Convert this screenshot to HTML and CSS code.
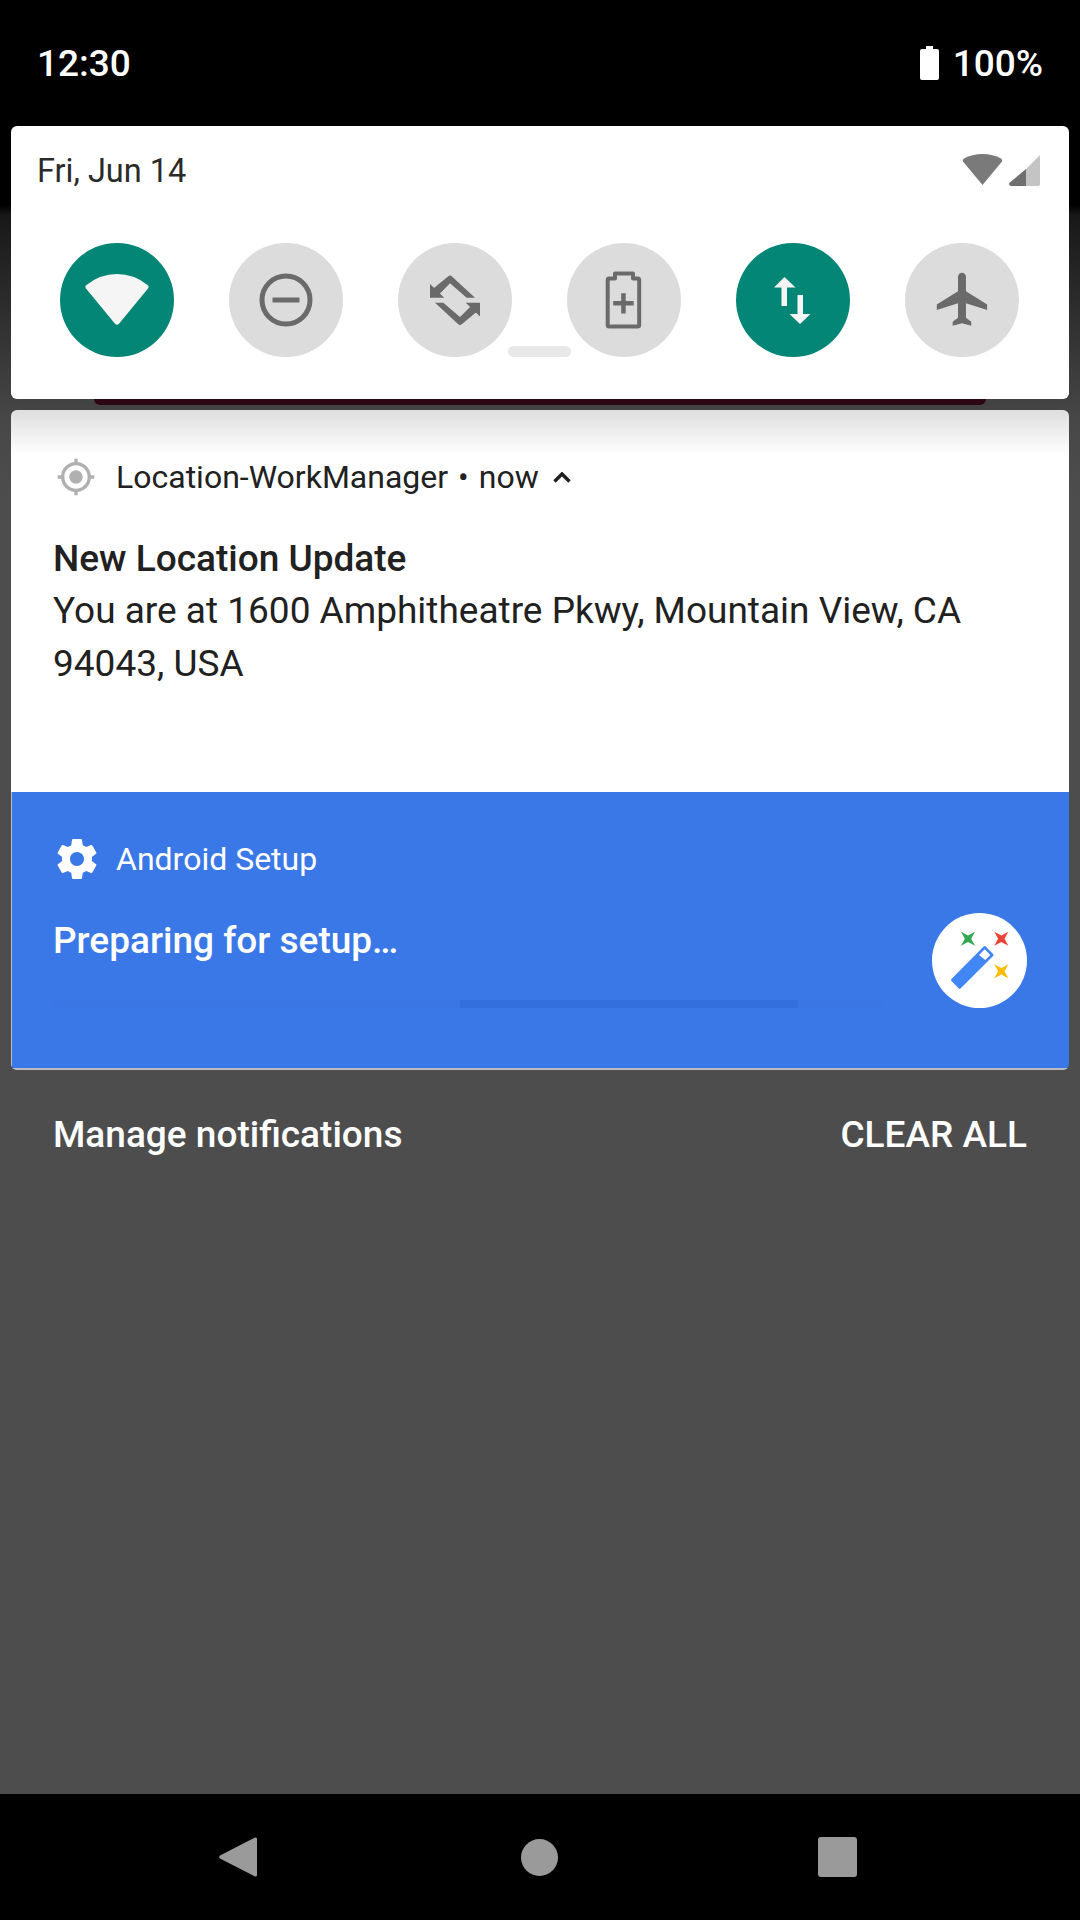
FILE: index.html
```html
<!DOCTYPE html>
<html lang="en">
<head>
  <meta charset="UTF-8">
  <meta name="viewport" content="width=device-width, initial-scale=1.0">
  <title>Notification shade</title>
  <link rel="stylesheet" href="styles.css">
</head>
<body>
  <div id="shade">
    <header class="status-bar">
      <span class="clock">12:30</span>
      <div class="status-right">
        <svg class="battery-icon" viewBox="0 0 19 34"><path d="M6 0h7v3h4a2 2 0 0 1 2 2v27a2 2 0 0 1-2 2H2a2 2 0 0 1-2-2V5a2 2 0 0 1 2-2h4z"/></svg>
        <span>100%</span>
      </div>
    </header>

    <section class="quick-panel">
      <div class="panel-top">
        <span class="date">Fri, Jun 14</span>
        <div class="panel-icons">
          <svg class="wifi-small" viewBox="0 0 41 32"><path d="M20.500 31 1 7.500Q0 6 2 4.500 10 0 20.500 0T39 4.500q2 1.500 1 3z"/></svg>
          <svg class="signal-small" viewBox="0 0 31 31"><path class="signal-off" d="M31 0v29a2 2 0 0 1-2 2H17V14z"/><path class="signal-on" d="M17 14v17H2a2 2 0 0 1-1.500-3.200z"/></svg>
        </div>
      </div>
      <div class="tiles">
        <div class="tile on">
          <svg viewBox="0 0 114 114"><path class="tile-fill-light" d="M54.800 80.500 26 45.500Q24.500 43.500 26.500 42 40 31 57 31T87.500 42Q89.500 43.500 88 45.500L59.200 80.500Q57 83 54.800 80.500z"/></svg>
        </div>
        <div class="tile">
          <svg viewBox="0 0 114 114"><circle class="tile-line" cx="57" cy="57" r="24"/><path class="tile-fill" d="M43.500 54.500h27v5h-27z"/></svg>
        </div>
        <div class="tile">
          <svg viewBox="0 0 114 114">
            <path class="tile-fill" d="M50 33.500Q52 31.500 54 33.500L77 54.700H68.700L52 40.300 42 50.500 36 45zM32 54.700V41L46.300 54.700z"/>
            <path class="tile-fill" transform="rotate(180 57 57.200)" d="M50 33.500Q52 31.500 54 33.500L77 54.700H68.700L52 40.300 42 50.500 36 45zM32 54.700V41L46.300 54.700z"/>
          </svg>
        </div>
        <div class="tile">
          <svg viewBox="0 0 114 114"><path class="tile-line battery-line" d="M40.700 37a1.500 1.500 0 0 1 1.500-1.500H48v-5h18v5h4.700a1.500 1.500 0 0 1 1.500 1.500v45a1.500 1.500 0 0 1-1.500 1.500H42.200a1.500 1.500 0 0 1-1.500-1.500z"/><path class="tile-fill" d="M54.200 50.300h4.500v7.800h8v4.500h-8v8h-4.500v-8h-8v-4.500h8z"/></svg>
        </div>
        <div class="tile on">
          <svg viewBox="0 0 114 114"><path class="tile-fill-light" d="M48.500 34 38 44.500h7.500V63h5.500V44.500h8.500zM61.500 52v19h-8l10.500 10 10.500-10H67V52z"/></svg>
        </div>
        <div class="tile">
          <svg viewBox="0 0 114 114"><g transform="translate(26.500 24.500) scale(2.650)"><path class="tile-fill" d="M21 16v-2l-8-5V3.500c0-.83-.67-1.500-1.500-1.500S10 2.670 10 3.500V9l-8 5v2l8-2.500V19l-2 1.500V22l3.500-1 3.500 1v-1.500L13 19v-5.500l8 2.500z"/></g></svg>
        </div>
      </div>
      <div class="handle"></div>
    </section>
    <div class="behind-strip"></div>

    <section class="card">
      <div class="note-location">
        <div class="note-head">
          <svg class="gps-icon" viewBox="0 0 24 24"><path d="M12 8c-2.210 0-4 1.790-4 4s1.790 4 4 4 4-1.790 4-4-1.790-4-4-4zm8.940 3c-.46-4.170-3.770-7.480-7.940-7.940V1h-2v2.060C6.830 3.520 3.520 6.830 3.060 11H1v2h2.060c.46 4.170 3.770 7.480 7.940 7.940V23h2v-2.060c4.170-.46 7.480-3.770 7.940-7.940H23v-2h-2.060zM12 19c-3.870 0-7-3.130-7-7s3.130-7 7-7 7 3.130 7 7-3.130 7-7 7z"/></svg>
          <span>Location-WorkManager</span>
          <span class="dot">•</span>
          <span>now</span>
          <svg class="chevron" viewBox="0 0 18 11"><path d="M1.500 9.500 9 2l7.500 7.500"/></svg>
        </div>
        <div class="note-title">New Location Update</div>
        <p class="note-text">You are at 1600 Amphitheatre Pkwy, Mountain View, CA 94043, USA</p>
      </div>
      <div class="note-setup">
        <div class="setup-main">
          <div class="note-head">
            <svg class="gear-icon" viewBox="0 0 24 24"><path d="M19.430 12.980c.04-.32.07-.64.07-.98s-.03-.66-.07-.98l2.110-1.650c.19-.15.24-.42.12-.64l-2-3.460c-.12-.22-.39-.3-.61-.22l-2.490 1c-.52-.4-1.080-.73-1.690-.98l-.38-2.650C14.460 2.180 14.250 2 14 2h-4c-.25 0-.46.18-.49.42l-.38 2.650c-.61.25-1.170.59-1.690.98l-2.490-1c-.23-.09-.49 0-.61.22l-2 3.460c-.13.22-.07.49.12.64l2.110 1.650c-.04.32-.07.65-.07.98s.03.66.07.98l-2.110 1.650c-.19.15-.24.42-.12.64l2 3.460c.12.22.39.3.61.22l2.490-1c.52.4 1.080.73 1.690.98l.38 2.650c.03.24.24.42.49.42h4c.25 0 .46-.18.49-.42l.38-2.650c.61-.25 1.170-.59 1.690-.98l2.490 1c.23.09.49 0 .61-.22l2-3.460c.12-.22.07-.49-.12-.64l-2.110-1.650zM12 15.500c-1.930 0-3.500-1.570-3.500-3.500s1.570-3.500 3.500-3.500 3.500 1.570 3.500 3.500-1.570 3.500-3.500 3.500z"/></svg>
            <span>Android Setup</span>
          </div>
          <div class="setup-title">Preparing for setup…</div>
          <div class="progress"><div class="progress-bar"></div></div>
        </div>
        <svg class="wand" viewBox="0 0 95 95">
          <circle cx="47.500" cy="47.500" r="47.500" fill="#fff"/>
          <path fill="#4285f4" stroke="#4285f4" stroke-width="3" stroke-linejoin="round" d="M52.700 34.500 60 42 27.700 74.300 20.500 67z"/>
          <path fill="#fff" d="M52.700 36.300 58.300 42l-5 5-6.300-5z"/>
          <path fill="#34a853" d="M29 18.700 36 22.500l7-3.800-3.800 7 3.800 7-7-3.800-7 3.800 3.800-7z"/>
          <path fill="#ea4335" d="M62.300 18.700l7 3.800 7-3.800-3.800 7 3.800 7-7-3.800-7 3.800 3.800-7z"/>
          <path fill="#fbbc04" d="M62.300 51.300l7 3.800 7-3.800-3.800 7 3.800 7-7-3.800-7 3.800 3.800-7z"/>
        </svg>
      </div>
    </section>

    <div class="footer-actions">
      <span>Manage notifications</span>
      <span>CLEAR ALL</span>
    </div>

    <nav class="nav-bar">
      <svg class="nav-back" viewBox="0 0 38 42"><path d="M36 1.500a1.500 1.500 0 0 1 2 1.500v36a1.500 1.500 0 0 1-2 1.500L1 22.500a2 2 0 0 1 0-3z"/></svg>
      <div class="nav-home"></div>
      <div class="nav-recent"></div>
    </nav>
  </div>
</body>
</html>
```

FILE: styles.css
```css
body {
  margin: 0;
  font-family: Roboto, sans-serif;
  background-color: #000;
}
#shade {
  display: flex;
  flex-direction: column;
  width: 1080px;
  height: 1920px;
  overflow: hidden;
  background: linear-gradient(#000 0, #000 205px, #181818 215px, #474747 420px, #4d4d4d 500px);
}

.status-bar {
  display: flex;
  justify-content: space-between;
  align-items: center;
  height: 126px;
  padding: 0 37px;
  font-size: 37px;
  font-weight: 500;
  color: #fff;
  box-sizing: border-box;
}
.status-right {
  display: flex;
  align-items: center;
  gap: 14px;
}
.battery-icon {
  width: 19px;
  height: 34px;
  fill: #fff;
}

.quick-panel {
  position: relative;
  height: 273px;
  margin: 0 11px;
  background-color: #fff;
  border-radius: 6px;
}
.panel-top {
  display: flex;
  justify-content: space-between;
  align-items: center;
  height: 88px;
  padding: 0 29px 0 26px;
}
.date {
  padding-top: 2px;
  font-size: 32.500px;
  color: #2b2b2b;
}
.panel-icons {
  display: flex;
  align-items: center;
  gap: 6px;
}
.wifi-small {
  width: 41px;
  height: 32px;
  fill: #7a7a7a;
}
.signal-small {
  width: 31px;
  height: 31px;
}
.signal-on {
  fill: #6f6f6f;
}
.signal-off {
  fill: #c4c4c4;
}
.tiles {
  display: flex;
  gap: 55px;
  padding: 29px 0 0 49px;
}
.tile {
  width: 114px;
  height: 114px;
  border-radius: 50%;
  background-color: #dcdcdc;
}
.tile.on {
  background-color: #038675;
}
.tile svg {
  display: block;
  width: 114px;
  height: 114px;
}
.tile-fill {
  fill: #6a6a6a;
}
.tile-fill-light {
  fill: #f5f5f5;
}
.tile-line {
  fill: none;
  stroke: #6a6a6a;
  stroke-width: 5;
  stroke-linejoin: round;
}
.battery-line {
  stroke-width: 4;
}
.handle {
  position: absolute;
  left: 497px;
  top: 220px;
  width: 63px;
  height: 11px;
  border-radius: 6px;
  background-color: #e8e8e8;
}
.behind-strip {
  height: 6px;
  margin: 0 94px 5px;
  background-color: #2d0613;
  border-radius: 0 0 6px 6px;
}

.card {
  margin: 0 11px;
  border-radius: 6px;
  overflow: hidden;
}
.note-location {
  height: 382px;
  padding: 0 42px;
  box-sizing: border-box;
  background: linear-gradient(#dedede 0, #fff 45px);
  color: #212121;
}
.note-head {
  display: flex;
  align-items: center;
  gap: 10px;
  font-size: 32px;
}
.note-location .note-head {
  padding-top: 47px;
  height: 40px;
}
.gps-icon {
  width: 40px;
  height: 40px;
  margin: 0 10.500px 0 2.500px;
  fill: #b0b0b0;
}
.dot {
  font-size: 31.500px;
}
.chevron {
  width: 18px;
  height: 11px;
  margin-left: 4px;
  fill: none;
  stroke: #212121;
  stroke-width: 3.500;
}
.note-title {
  margin-top: 36px;
  font-size: 37px;
  font-weight: 500;
  line-height: 52px;
}
.note-text {
  margin: 0;
  font-size: 37px;
  line-height: 52.500px;
}
.note-setup {
  display: flex;
  justify-content: space-between;
  height: 278px;
  padding: 0 42px 0 41px;
  box-sizing: border-box;
  background-color: #3b78e7;
  border-bottom: 2px solid #bdbdbd;
  border-left: 1px solid #bdbdbd;
  color: #fff;
}
.setup-main {
  width: 829px;
}
.note-setup .note-head {
  height: 40px;
  padding-top: 47px;
  gap: 15px;
}
.gear-icon {
  width: 48px;
  height: 48px;
  fill: #fff;
}
.setup-title {
  margin-top: 36px;
  font-size: 37px;
  font-weight: 500;
  line-height: 52px;
}
.progress {
  height: 8px;
  margin-top: 33px;
  background-color: #3a76e4;
}
.progress-bar {
  width: 338px;
  height: 8px;
  margin-left: 407px;
  background-color: #3470dd;
}
.wand {
  width: 95px;
  height: 95px;
  margin-top: 121px;
  flex-shrink: 0;
}

.footer-actions {
  display: flex;
  justify-content: space-between;
  align-items: center;
  height: 128px;
  padding: 0 53px;
  font-size: 37px;
  font-weight: 500;
  color: #fff;
}

.nav-bar {
  display: flex;
  justify-content: center;
  align-items: center;
  gap: 260px;
  height: 126px;
  margin-top: auto;
  background-color: #000;
}
.nav-back {
  width: 38px;
  height: 42px;
  margin: 0 4px 0 -4px;
  fill: #9a9a9a;
}
.nav-home {
  width: 37px;
  height: 37px;
  border-radius: 50%;
  background-color: #9a9a9a;
}
.nav-recent {
  width: 39px;
  height: 40px;
  border-radius: 3px;
  background-color: #9a9a9a;
}
```
